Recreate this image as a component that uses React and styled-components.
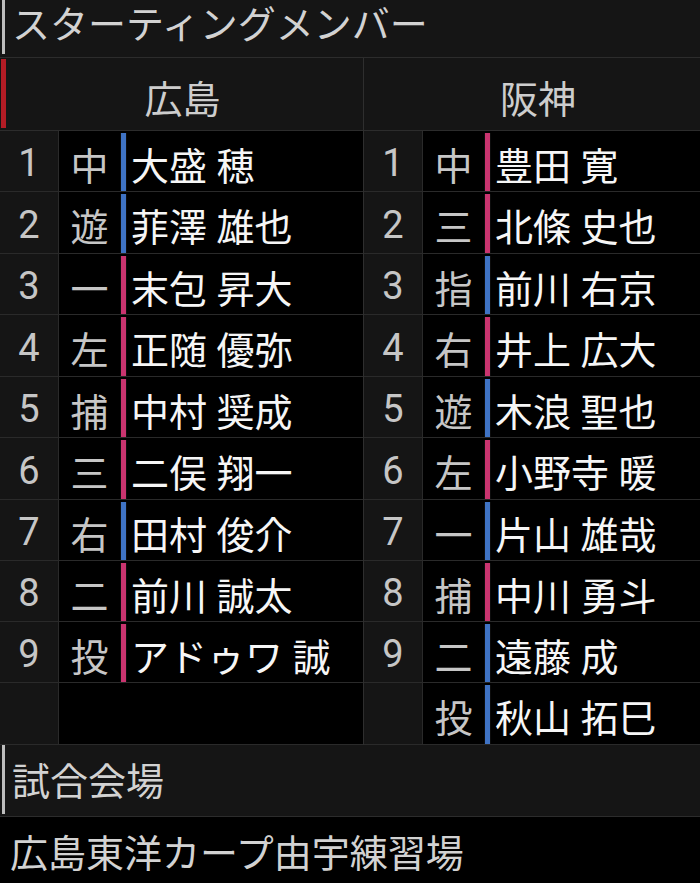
import React from "react";
import styled, { createGlobalStyle } from "styled-components";

const GlobalStyle = createGlobalStyle`
  body {
    margin: 0;
    background: #000;
    font-family: Roboto, "Noto Sans CJK JP", sans-serif;
  }
`

const Page = styled.div`
  width: 700px;
  height: 883px;
  overflow: hidden;
  background: #000;
`

const SectionTitle = styled.div`
  display: flex;
  height: ${(p) => p.height}px;
  background: #151515;
  border-bottom: 1px solid #2c2c2c;
  box-sizing: border-box;
`
const Marker = styled.div`
  width: 3px;
  margin: ${(p) => p.margin};
  background: #bdbdbd;
  flex-shrink: 0;
`
const TitleText = styled.div`
  padding-left: 7px;
  font-size: 38px;
  line-height: ${(p) => p.lineHeight}px;
  color: #d2d2d2;
  white-space: nowrap;
`

const Lineup = styled.div`
  display: grid;
  grid-template-columns: 363px 1fr;
`
const Team = styled.div`
  border-left: ${(p) => (p.divided ? "1px solid #2e2e2e" : "none")};
`
const TeamHeader = styled.div`
  display: flex;
  height: 73px;
  background: #151515;
  border-bottom: 1px solid #2c2c2c;
  box-sizing: border-box;
`
const TeamBar = styled.div`
  width: 5px;
  margin: 1px 0 2px 1px;
  background: ${(p) => p.color};
  flex-shrink: 0;
`
const TeamName = styled.div`
  flex: 1;
  display: flex;
  align-items: center;
  justify-content: center;
  padding: 4px 6px 0 ${(p) => p.shift}px;
  font-size: 38px;
  color: #cdcdcd;
`

const Row = styled.div`
  display: grid;
  grid-template-columns: 59px 61px 7px 1fr;
  height: ${(p) => p.height}px;
  border-bottom: 1px solid #2a2a2a;
  box-sizing: border-box;
  font-size: 38px;
`
const Order = styled.div`
  display: flex;
  align-items: center;
  justify-content: center;
  padding-top: 4px;
  background: #151515;
  border-right: 1px solid #2a2a2a;
  color: #c6c6c6;
`
const Position = styled.div`
  display: flex;
  align-items: center;
  justify-content: center;
  padding-top: 4px;
  color: #c6c6c6;
`
const Hand = styled.div`
  margin: 2px 0 0;
  background: ${(p) => (p.side === "L" ? "#3f73c4" : p.side === "R" ? "#c9346f" : "transparent")};
  border: ${(p) => (p.side ? "1px solid #0c0c0c" : "none")};
  border-width: 0 1px;
`
const PlayerName = styled.div`
  display: flex;
  align-items: center;
  padding: 4px 0 0 4px;
  color: #f6f6f6;
  white-space: nowrap;
`

const Venue = styled.div`
  height: 68px;
  padding: 11px 0 0 10px;
  box-sizing: border-box;
  font-size: 38px;
  line-height: 52px;
  color: #d2d2d2;
  white-space: nowrap;
`

const carp = [
  ["1", "中", "大盛 穂", "L"],
  ["2", "遊", "菲澤 雄也", "L"],
  ["3", "一", "末包 昇大", "R"],
  ["4", "左", "正随 優弥", "R"],
  ["5", "捕", "中村 奨成", "R"],
  ["6", "三", "二俣 翔一", "R"],
  ["7", "右", "田村 俊介", "L"],
  ["8", "二", "前川 誠太", "R"],
  ["9", "投", "アドゥワ 誠", "R"],
  ["", "", "", ""],
];

const tigers = [
  ["1", "中", "豊田 寛", "R"],
  ["2", "三", "北條 史也", "R"],
  ["3", "指", "前川 右京", "L"],
  ["4", "右", "井上 広大", "R"],
  ["5", "遊", "木浪 聖也", "L"],
  ["6", "左", "小野寺 暖", "R"],
  ["7", "一", "片山 雄哉", "L"],
  ["8", "捕", "中川 勇斗", "R"],
  ["9", "二", "遠藤 成", "L"],
  ["", "投", "秋山 拓巳", "L"],
];

const rowHeights = [61, 62, 61, 62, 61, 62, 61, 61, 61, 62];

const TeamColumn = ({ name, color, shift, players, divided }) => (
  <Team divided={divided}>
    <TeamHeader>
      {color ? <TeamBar color={color} /> : null}
      <TeamName shift={shift}>{name}</TeamName>
    </TeamHeader>
    {players.map(([order, pos, player, side], i) => (
      <Row key={i} height={rowHeights[i]}>
        <Order>{order}</Order>
        <Position>{pos}</Position>
        <Hand side={side} />
        <PlayerName>{player}</PlayerName>
      </Row>
    ))}
  </Team>
);

const App = () => {
  return (
    <>
      <GlobalStyle />
      <Page>
        <SectionTitle height={58}>
          <Marker margin="0 0 3px 2px" />
          <TitleText lineHeight={50}>スターティングメンバー</TitleText>
        </SectionTitle>
        <Lineup>
          <TeamColumn name="広島" color="#b31c25" shift={2} players={carp} />
          <TeamColumn name="阪神" shift={18} players={tigers} divided />
        </Lineup>
        <SectionTitle height={72}>
          <Marker margin="0 0 2px 2px" />
          <TitleText lineHeight={74}>試合会場</TitleText>
        </SectionTitle>
        <Venue>広島東洋カープ由宇練習場</Venue>
      </Page>
    </>
  );
};

export default App;
